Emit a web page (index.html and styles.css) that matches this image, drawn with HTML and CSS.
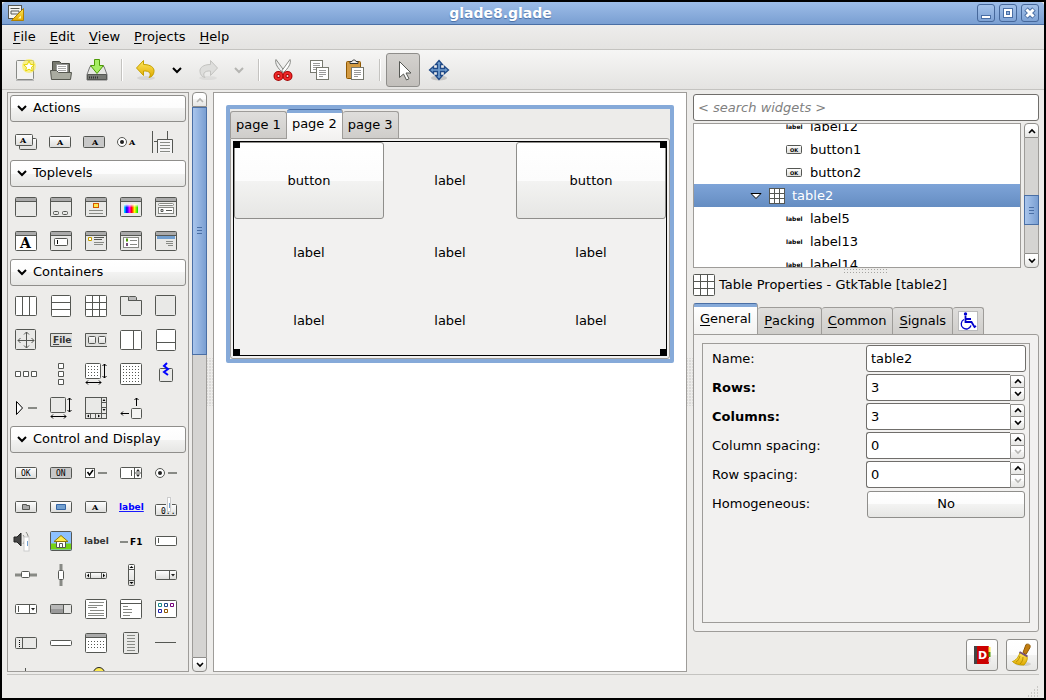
FILE: index.html
```html
<!DOCTYPE html>
<html lang="en">
<head>
    <meta charset="UTF-8">
    <meta name="viewport" content="width=device-width, initial-scale=1.0">
    <title>glade8.glade</title>
    <link rel="stylesheet" href="styles.css">
</head>
<body>
<!-- shared shapes -->
<svg class="defs" width="0" height="0" aria-hidden="true">
    <defs>
        <linearGradient id="face" x1="0" y1="0" x2="0" y2="1"><stop offset="0" stop-color="#fff"/><stop offset="1" stop-color="#dcdcda"/></linearGradient>
        <linearGradient id="gold" x1="0" y1="0" x2="0" y2="1"><stop offset="0" stop-color="#ffe95c"/><stop offset="1" stop-color="#e0a800"/></linearGradient>
        <linearGradient id="rainbow"><stop offset="0" stop-color="#0ff"/><stop offset=".2" stop-color="#00f"/><stop offset=".4" stop-color="#f0f"/><stop offset=".55" stop-color="#f00"/><stop offset=".75" stop-color="#ff0"/><stop offset="1" stop-color="#0d0"/></linearGradient>
        <linearGradient id="fade" x1="0" y1="0" x2="0" y2="1"><stop offset="0" stop-color="#fff"/><stop offset=".4" stop-color="#fff" stop-opacity="0"/></linearGradient>
        <pattern id="dots" width="3" height="3" patternUnits="userSpaceOnUse"><rect width="1" height="1" fill="#555753"/></pattern>
        <symbol id="win" viewBox="0 0 22 22"><rect x=".5" y="1.5" width="21" height="19" rx="1" fill="#e9e9e7" stroke="#555753"/><path d="M1 3.5h20" stroke="#aaa" stroke-width="3"/><path d="M1 5.5h20" stroke="#555753"/></symbol>
        <symbol id="grid" viewBox="0 0 22 22"><rect x=".5" y=".5" width="21" height="21" rx="1" fill="#fff" stroke="#555753"/><path d="M7.5 0v22M14.5 0v22M0 7.5h22M0 14.5h22" stroke="#555753"/></symbol>
        <symbol id="chev" viewBox="0 0 12 12"><path d="M2 4l4 4 4-4" fill="none" stroke="currentColor" stroke-width="2"/></symbol>
        <symbol id="up" viewBox="0 0 10 8"><path d="M2 6l3-3 3 3" fill="none" stroke="currentColor" stroke-width="1.6"/></symbol>
        <symbol id="down" viewBox="0 0 10 8"><path d="M2 2l3 3 3-3" fill="none" stroke="currentColor" stroke-width="1.6"/></symbol>
        <symbol id="page" viewBox="0 0 13 13"><rect x=".5" y=".5" width="12" height="12" fill="#fff" stroke="#77796f"/><path d="M3 3.5h7M3 5.5h7M3 7.5h7M3 9.5h4" stroke="#999"/></symbol>
        <symbol id="resize" viewBox="0 0 22 22"><path d="M19.5 1v14M1 19.5h15M17.5 3l2-2 2 2M17.5 13l2 2 2-2M3 17.500l-2 2 2 2M14 17.500l2 2-2 2" fill="none" stroke="#000"/></symbol>
    </defs>
</svg>

<div class="window">
    <header class="titlebar">
        <svg class="app-icon" width="16" height="16" viewBox="0 0 16 16"><rect x=".5" y=".5" width="13" height="13" fill="#f4f4f2" stroke="#555753"/><path d="M2.500 3.500h9M3 6h8v3H3z" fill="none" stroke="#555753"/><path d="M3.500 15.500h12v-12z" fill="url(#gold)" stroke="#b08000"/><path d="M10 13.500h3v-3z" fill="#fff3b0"/></svg>
        <h1>glade8.glade</h1>
        <div class="win-buttons">
            <button aria-label="Minimize"><svg width="16" height="16"><rect x="3.500" y="10.500" width="9" height="3" fill="#fff" stroke="#4a6fa5"/></svg></button>
            <button aria-label="Maximize"><svg width="16" height="16"><path d="M5 5h6v6H5z" fill="none" stroke="#4a6fa5" stroke-width="4"/><path d="M5 5h6v6H5z" fill="none" stroke="#fff" stroke-width="2"/></svg></button>
            <button aria-label="Close"><svg width="16" height="16"><path d="M4 4l8 8M12 4l-8 8" stroke="#4a6fa5" stroke-width="5"/><path d="M4.500 4.500l7 7M11.500 4.500l-7 7" stroke="#fff" stroke-width="3"/></svg></button>
        </div>
    </header>

    <nav class="menubar">
        <button><u>F</u>ile</button>
        <button><u>E</u>dit</button>
        <button><u>V</u>iew</button>
        <button><u>P</u>rojects</button>
        <button><u>H</u>elp</button>
    </nav>

    <div class="toolbar">
        <button aria-label="New"><svg width="24" height="24"><rect x="3.500" y="2.500" width="17" height="19" rx="1" fill="#f3f3f1" stroke="#888a85"/><path d="M3 22.500h18" stroke="#bbb"/><circle cx="16" cy="8" r="7" fill="#fcee4f" opacity=".65"/><path d="M16 3l1.600 3.400 3.700.400-2.800 2.500.8 3.700-3.300-1.800-3.300 1.800.8-3.700-2.800-2.500 3.700-.400z" fill="#fff" stroke="#e8d500"/></svg></button>
        <button aria-label="Open"><svg width="24" height="24"><path d="M3.500 19V3.500h7l2 2h8V19z" fill="#77796f" stroke="#4b4d47"/><path d="M7.500 6.500h11v9h-11z" fill="#fff" stroke="#999"/><path d="M9 8.500h8M9 10.500h8M9 12.500h8" stroke="#aaa"/><path d="M1.500 12.500h6l2 2h13l-1 7h-19z" fill="#a9aba0" stroke="#55574f"/></svg></button>
        <button aria-label="Save"><svg width="24" height="24"><path d="M5 8.500h14l3 8v5.500H2v-5.500z" fill="#e6e6e3" stroke="#777"/><path d="M2.500 16.500h19v5h-19z" fill="#777974" stroke="#555753"/><path d="M4 19.500h10" stroke="#333" stroke-width="2" stroke-dasharray="1 1"/><path d="M9.500 1.500h5v6h4L12 15.500 5.500 7.500h4z" fill="#a6ee62" stroke="#4e9a06"/></svg></button>
        <span class="sep"></span>
        <button aria-label="Undo"><svg width="24" height="24"><ellipse cx="12" cy="20" rx="9" ry="2" fill="#000" opacity=".08"/><path d="M9.500 2.500v4c7 0 11 3 10.500 7-.2 3-2 5.500-5 6 2.500-3 1.500-7-5.500-6.500v4.500l-7-7.500z" fill="url(#gold)" stroke="#c4a000"/></svg></button>
        <button class="arrow" aria-label="Undo history"><svg width="12" height="12"><use href="#chev"/></svg></button>
        <button aria-label="Redo" disabled><svg width="24" height="24"><ellipse cx="12" cy="20" rx="9" ry="2" fill="#000" opacity=".05"/><path d="M14.500 2.500v4c-7 0-11 3-10.500 7 .2 3 2 5.500 5 6-2.500-3-1.500-7 5.500-6.500v4.500l7-7.500z" fill="#dededc" stroke="#c3c3c0"/></svg></button>
        <button class="arrow" aria-label="Redo history" disabled><svg width="12" height="12"><use href="#chev"/></svg></button>
        <span class="sep"></span>
        <button aria-label="Cut"><svg width="24" height="24"><path d="M5 1.500c-1.500 4 2 9 6.500 13l1.500-2z" fill="#eee" stroke="#888a85"/><path d="M19 1.500c1.500 4-2 9-6.500 13l-1.500-2z" fill="#fff" stroke="#888a85"/><circle cx="7.500" cy="18" r="3" fill="none" stroke="#a40000" stroke-width="4"/><circle cx="16.500" cy="18" r="3" fill="none" stroke="#a40000" stroke-width="4"/><circle cx="7.500" cy="18" r="3" fill="none" stroke="#ef2929" stroke-width="2"/><circle cx="16.500" cy="18" r="3" fill="none" stroke="#ef2929" stroke-width="2"/></svg></button>
        <button aria-label="Copy"><svg width="24" height="24"><use href="#page" x="3" y="2" width="13" height="13"/><use href="#page" x="9" y="9" width="13" height="13"/></svg></button>
        <button aria-label="Paste"><svg width="24" height="24"><rect x="3.500" y="3.500" width="14" height="17" rx="1" fill="#d39a42" stroke="#8f5902"/><path d="M7 5.500V3.500h2c0-2 4-2 4 0h2v2z" fill="#eee" stroke="#333"/><use href="#page" x="8" y="9" width="13" height="13"/></svg></button>
        <span class="sep"></span>
        <button class="pressed" aria-label="Selector"><svg width="24" height="24"><path d="M8.500 3.500v16l4-3.500 3 6 2.500-1.300-3-5.700h5z" fill="#fff" stroke="#555753"/></svg></button>
        <button aria-label="Drag and resize"><svg width="24" height="24"><ellipse cx="12" cy="20" rx="8" ry="2.500" fill="#000" opacity=".15"/><path d="M12 2.500l3.500 4h-2v4h4v-2l4 3.500-4 3.500v-2h-4v4h2L12 21.500l-3.500-4h2v-4h-4v2L2.500 12l4-3.500v2h4v-4h-2z" fill="#729fcf" stroke="#204a87" stroke-width="1.300"/></svg></button>
    </div>

    <main class="workspace">
        <aside class="palette">
            <section>
                <button class="group"><svg width="12" height="12"><use href="#chev"/></svg>Actions</button>
                <div class="icons">
                    <svg><rect x="4.500" y="7.500" width="17" height="11" rx="1" fill="url(#face)"/><rect x=".5" y="3.500" width="17" height="11" rx="1" fill="url(#face)"/><text x="5" y="12">A</text></svg>
                    <svg><rect x="-.5" y="5.500" width="21" height="11" rx="1" fill="url(#face)"/><text x="7" y="14">A</text></svg>
                    <svg><rect x="-1.500" y="5.500" width="21" height="11" rx="1" fill="#c8c8c8"/><text x="7" y="14">A</text></svg>
                    <svg><circle cx="2" cy="11" r="4.500" fill="#fff"/><circle cx="2" cy="11" r="2" fill="#222" stroke="none"/><text x="9" y="14">A</text></svg>
                    <svg><path d="M-2.500 0v22M12.500 0v8M-1 10.500h4"/><path d="M2.500 22V8.500h15V22" fill="#f5f5f5"/><path class="thin" d="M5 11.500h10M5 14.500h10M5 17.500h10M5 20.500h10"/></svg>
                </div>
            </section>
            <section>
                <button class="group"><svg width="12" height="12"><use href="#chev"/></svg>Toplevels</button>
                <div class="icons">
                    <svg><use href="#win"/></svg>
                    <svg><use href="#win"/><rect x="3.500" y="15.500" width="5" height="3" rx="1"/><rect x="12.500" y="15.500" width="5" height="3" rx="1"/></svg>
                    <svg><use href="#win"/><rect x="8.500" y="7.500" width="5" height="4" fill="#fce94f" stroke="#d45500"/><path class="thin" d="M4 14.500h14M4 17.500h14"/></svg>
                    <svg><use href="#win"/><rect x="4" y="8" width="14" height="9" fill="url(#rainbow)" stroke="none"/><rect x="4" y="8" width="14" height="9" fill="url(#fade)" stroke="none"/></svg>
                    <svg><use href="#win"/><rect class="thin" x="3.500" y="7.500" width="15" height="2" rx="1" fill="#fff"/><rect class="thin" x="3.500" y="11.500" width="15" height="6" fill="#fff"/><path d="M6 13.500h2v2H6zM11 14.500h6"/></svg>
                    <svg><use href="#win"/><path d="M1 6h20v14H1z" fill="#fff" stroke="none"/><text class="big" x="5" y="18">A</text></svg>
                    <svg><use href="#win"/><rect x="4.500" y="8.500" width="13" height="7" rx="1" fill="#fff"/><path d="M7.500 10v4" stroke="#000"/></svg>
                    <svg><use href="#win"/><path d="M3.500 7.500h3v3h-3z" fill="#fff" stroke="#c4a000"/><path d="M9 7.500h10M9 9.500h8" /><path class="thin" d="M9 12.500h10M9 14.500h9"/></svg>
                    <svg><use href="#win"/><rect class="thin" x="3.500" y="7.500" width="15" height="10" fill="#fff"/><path d="M6 10h2" stroke="#4e9a06" stroke-width="3"/><path d="M6 14.500h2" stroke="#75507b" stroke-width="3"/><path class="thin" d="M10 10.500h7M10 14.500h7"/></svg>
                    <svg><use href="#win"/><path d="M2 7.500h18" stroke="#729fcf" stroke-width="3"/><path class="thin" d="M11 11.500h7M11 13.500h7M13 15.500h5"/></svg>
                </div>
            </section>
            <section>
                <button class="group"><svg width="12" height="12"><use href="#chev"/></svg>Containers</button>
                <div class="icons">
                    <svg><rect x=".5" y="1.500" width="21" height="19" rx="1" fill="#fff"/><path d="M7.500 2v19M14.500 2v19"/></svg>
                    <svg><rect x="1.500" y=".5" width="19" height="21" rx="1" fill="#fff"/><path d="M1 7.500h20M1 14.500h20"/></svg>
                    <svg><use href="#grid"/></svg>
                    <svg><path d="M.5 19.500v-18h8v4h13v14l-1 1h-19z" fill="#e9e9e7"/><path d="M8.500 5.500v-3l1-1h6l1 1v3z" fill="#bbb"/></svg>
                    <svg><rect x=".5" y=".5" width="20" height="20" rx="1" fill="#e9e9e7"/></svg>
                    <svg><rect x=".5" y=".5" width="20" height="20" rx="1" fill="#e9e9e7"/><path d="M11.500 3v16M3 11.500h16M9 5.500l2.500-2.500 2.500 2.500M9 16.500l2.500 2.500 2.500-2.500M5.500 9L3 11.500 5.500 14M16.500 9l2.500 2.500-2.500 2.500"/></svg>
                    <svg><path d="M22 4.500H.5v13H22" fill="#e0e0de"/><text class="sans" x="3" y="14"><tspan text-decoration="underline">F</tspan>ile</text></svg>
                    <svg><path d="M22 4.500H.5v13H22" fill="#e0e0de"/><rect x="3.500" y="7.500" width="7" height="7" rx="1" fill="url(#face)"/><rect x="13.500" y="7.500" width="7" height="7" rx="1" fill="url(#face)"/></svg>
                    <svg><rect x=".5" y="1.500" width="21" height="19" rx="1" fill="#fff"/><path d="M13.500 2v19"/></svg>
                    <svg><rect x="1.500" y=".5" width="19" height="21" rx="1" fill="#fff"/><path d="M1 13.500h20"/></svg>
                    <svg><path d="M.5 8.500h5v5h-5zM8.500 8.500h5v5h-5zM16.500 8.500h5v5h-5z" fill="#fff"/></svg>
                    <svg><path d="M8.500.5h5v5h-5zM8.500 8.500h5v5h-5zM8.500 16.500h5v5h-5z" fill="#fff"/></svg>
                    <svg><rect x=".5" y=".5" width="15" height="15" rx="1" fill="#fff"/><rect x="3" y="3" width="11" height="11" fill="url(#dots)" stroke="none"/><use href="#resize"/></svg>
                    <svg><rect x=".5" y=".5" width="21" height="21" rx="1" fill="#fff"/><rect x="3" y="3" width="17" height="17" fill="url(#dots)" stroke="none"/></svg>
                    <svg><rect x="4.500" y="5.500" width="13" height="13" rx="1" fill="#e9e9e7"/><path d="M12 0L9 3l4 3-4 3 4 3" stroke="#00f" stroke-width="2"/></svg>
                    <svg><path d="M1.500 4.500v13l6-6.500z" fill="#fff" stroke="#000"/><path class="thin" d="M13 11h9" stroke-width="2"/></svg>
                    <svg><rect x=".5" y=".5" width="15" height="15" rx="1" fill="#e9e9e7"/><use href="#resize"/></svg>
                    <svg><rect x=".5" y=".5" width="21" height="21" fill="#e9e9e7"/><path d="M16.500 0v22M0 16.500h22M16 5.500h5M16 10.500h5M5.500 16v6M10.500 16v6"/><path d="M17.500 4l1.500-2 1.500 2zM17.500 12l1.500 2 1.500-2zM4 17.500L2 19l2 1.500zM13 17.500l2 1.500-2 1.500z" fill="#000" stroke="none"/></svg>
                    <svg><rect x="11.500" y="11.500" width="10" height="10" rx="1" fill="#f4f4f2"/><path d="M16.500 1v8M14.500 3l2-2 2 2M1 16.500h8M3 14.500l-2 2 2 2" stroke="#000"/></svg>
                </div>
            </section>
            <section>
                <button class="group"><svg width="12" height="12"><use href="#chev"/></svg>Control and Display</button>
                <div class="icons">
                    <svg><rect x=".5" y="5.500" width="21" height="11" rx="1" fill="url(#face)"/><text class="mono" x="6" y="14">OK</text></svg>
                    <svg><rect x=".5" y="5.500" width="21" height="11" rx="1" fill="#c8c8c8"/><text class="mono" x="6" y="14">ON</text></svg>
                    <svg><rect x=".5" y="6.500" width="9" height="9" fill="#fff"/><path d="M2.500 10l2 3 3.500-5" stroke="#000" stroke-width="1.500"/><path class="thin" d="M13 11h9" stroke-width="2"/></svg>
                    <svg><rect x=".5" y="5.500" width="21" height="11" rx="1" fill="#fff"/><path d="M14.500 5v12M15 11h7M11.500 8v6"/><path d="M16 9.500l2-2.500 2 2.500zM16 12.500l2 2.500 2-2.500z" fill="#222" stroke="none"/></svg>
                    <svg><circle cx="5" cy="11" r="4.500" fill="#fff"/><circle cx="5" cy="11" r="2" fill="#222" stroke="none"/><path class="thin" d="M13 11h9" stroke-width="2"/></svg>
                    <svg><rect x=".5" y="5.500" width="21" height="11" rx="1" fill="url(#face)"/><path d="M7.500 13.500v-5h4v1h3v4z" fill="#aaa"/></svg>
                    <svg><rect x=".5" y="5.500" width="21" height="11" rx="1" fill="url(#face)"/><path d="M6.500 8.500h9v5h-9z" fill="#729fcf" stroke="#3465a4"/></svg>
                    <svg><rect x=".5" y="5.500" width="21" height="11" rx="1" fill="url(#face)"/><text x="7" y="14">A</text></svg>
                    <svg><text class="link" x="-1" y="14">label</text></svg>
                    <svg><rect x=".5" y="8.500" width="21" height="11" rx="1" fill="url(#face)"/><text class="mono" x="6" y="18">0..</text><rect x="11" y="1" width="6" height="15" fill="#eee" stroke="none"/><rect x="12.500" y="1.500" width="3" height="14" fill="#fff" style="stroke:#ccc"/><path d="M14.500 7v5" stroke="#729fcf"/></svg>
                    <svg><path d="M-1 7h3l4-4v13l-4-4h-3z" fill="#444" stroke="#222"/><path class="thin" d="M8 5c2 2 2 6 0 9M11 2c3 4 3 8 1 12"/><rect x="9" y="7" width="5" height="14" fill="#fff" stroke="#ccc"/><path d="M12.500 11v5" stroke="#729fcf"/></svg>
                    <svg><rect x=".5" y="1.500" width="21" height="19" rx="1" fill="#8cc0ff"/><path d="M1 16.500h20" stroke="#73d216" stroke-width="6"/><path d="M6.500 17.500v-6h9v6z" fill="#fff"/><path d="M4 11.500l7-6 7 6z" fill="#fce94f" stroke="#8f7902"/><path d="M9.500 17.500v-4h3v4"/></svg>
                    <svg><text class="sans" x="-1" y="14">label</text></svg>
                    <svg><path class="thin" d="M0 12h8" stroke-width="2"/><text class="sans black" x="10" y="15">F1</text></svg>
                    <svg><rect x=".5" y="6.500" width="21" height="9" rx="1" fill="#fff"/><path d="M3.500 8v5"/></svg>
                    <svg><path class="thin" d="M0 11h22" stroke-width="3"/><rect x="6.500" y="7.500" width="8" height="6" rx="1" fill="#fff"/></svg>
                    <svg><path class="thin" d="M11 0v22" stroke-width="3"/><rect x="8.500" y="6.500" width="5" height="9" rx="1" fill="#fff"/></svg>
                    <svg><rect x=".5" y="8.500" width="21" height="6" rx="1" fill="url(#face)"/><path d="M5.500 8v7M16.500 8v7"/><path d="M4 9.500l-2 2 2 2zM18 9.500l2 2-2 2z" fill="#000" stroke="none"/></svg>
                    <svg><rect x="8.500" y=".5" width="6" height="21" rx="1" fill="url(#face)"/><path d="M8 5.500h7M8 16.500h7"/><path d="M9.500 4l2-2 2 2zM9.500 18l2 2 2-2z" fill="#000" stroke="none"/></svg>
                    <svg><rect x=".5" y="6.500" width="21" height="9" rx="1" fill="url(#face)"/><path d="M14.500 6v10"/><path d="M16 10h4l-2 2.500z" fill="#222" stroke="none"/></svg>
                    <svg><rect x=".5" y="6.500" width="21" height="9" rx="1" fill="#fff"/><path d="M14.500 6v10M3.500 8v6"/><path d="M16 10h4l-2 2.500z" fill="#222" stroke="none"/></svg>
                    <svg><rect x=".5" y="6.500" width="21" height="9" rx="1" fill="#e6e6e4"/><path d="M1 7h13v8H1z" fill="#999" stroke="none"/><path d="M1 9h13" stroke="#b8b8b8" stroke-width="4"/><path d="M13.500 6v10"/></svg>
                    <svg><rect x=".5" y="1.500" width="21" height="19" rx="1" fill="#fff"/><path class="thin" d="M4 4.500h15M3 7.500h15M3 9.500h9M5 12.500h14M3 15.500h16M3 17.500h16"/></svg>
                    <svg><rect x=".5" y="1.500" width="21" height="19" rx="1" fill="#fff"/><path d="M1 5.500h20"/><path class="thin" d="M3 8.500h5M3 11.500h9M3 14.500h9M3 17.500h7"/></svg>
                    <svg><rect x=".5" y="2.500" width="21" height="17" rx="1" fill="#fff"/><path d="M3.500 5.500h3v3h-3z" stroke="#1a8a8a"/><path d="M9.500 5.500h3v3h-3z" stroke="#204a87"/><path d="M15.500 5.500h3v3h-3z" stroke="#75007b"/><path d="M3.500 11.500h3v3h-3z" stroke="#22a"/><path d="M9.500 11.500h3v3h-3z" stroke="#8f5902"/></svg>
                    <svg><rect x=".5" y="5.500" width="21" height="11" rx="1" fill="#e9e9e7"/><path d="M7.500 5v12"/><path d="M4.500 8v7" stroke="#000" stroke-dasharray="1 1"/></svg>
                    <svg><rect x=".5" y="8.500" width="21" height="5" rx="1" fill="#fff"/></svg>
                    <svg><rect x=".5" y="1.500" width="21" height="19" rx="1" fill="#fff"/><path d="M1 3.500h20" stroke="#aaa" stroke-width="3"/><path d="M1 5.500h20"/><rect x="3" y="7" width="16" height="11" fill="url(#dots)" stroke="none"/></svg>
                    <svg><rect x="3.500" y=".5" width="15" height="21" rx="1" fill="#e9e9e7"/><path class="thin" d="M7 3.500h8M7 6.500h8M7 9.500h8M7 12.500h8M7 15.500h8M7 18.500h8"/></svg>
                    <svg><path d="M0 10.500h21"/></svg>
                    <svg><path d="M10.500 2v20"/></svg>
                    <svg></svg>
                    <svg><circle cx="14" cy="7" r="5.500" fill="#fce94f" stroke="#222"/></svg>
                </div>
            </section>
        </aside>
        <div class="scrollbar">
            <button aria-label="Scroll up" disabled><svg width="10" height="8"><use href="#up"/></svg></button>
            <div class="trough"><div class="thumb tall"></div></div>
            <button aria-label="Scroll down"><svg width="10" height="8"><use href="#down"/></svg></button>
        </div>
        <div class="splitter"></div>

        <div class="design">
            <div class="notebook">
                <div class="tabs">
                    <button>page 1</button>
                    <button class="active">page 2</button>
                    <button>page 3</button>
                </div>
                <div class="page">
                    <div class="selection">
                        <button>button</button><span>label</span><button>button</button>
                        <span>label</span><span>label</span><span>label</span>
                        <span>label</span><span>label</span><span>label</span>
                        <i class="handle nw"></i><i class="handle ne"></i><i class="handle sw"></i><i class="handle se"></i>
                    </div>
                </div>
            </div>
        </div>
        <div class="splitter"></div>

        <aside class="side">
            <input class="search" type="text" aria-label="Search widgets" placeholder="&lt; search widgets &gt;">
            <div class="inspector">
                <ul class="tree">
                    <li><small>label</small>label12</li>
                    <li><svg width="16" height="9"><rect x=".5" y=".5" width="15" height="8" rx="1" fill="url(#face)" stroke="#555753"/><text class="tiny" x="4" y="7">OK</text></svg>button1</li>
                    <li><svg width="16" height="9"><rect x=".5" y=".5" width="15" height="8" rx="1" fill="url(#face)" stroke="#555753"/><text class="tiny" x="4" y="7">OK</text></svg>button2</li>
                    <li class="selected"><svg width="12" height="8"><path d="M1 1.500h10L6 6.500z" fill="#fff" stroke="#000"/></svg><svg width="16" height="16"><rect x=".5" y=".5" width="15" height="15" fill="#fff" stroke="#555753"/><path d="M5.500 0v16M10.500 0v16M0 5.500h16M0 10.500h16" stroke="#555753"/></svg>table2</li>
                    <li><small>label</small>label5</li>
                    <li><small>label</small>label13</li>
                    <li><small>label</small>label14</li>
                </ul>
                <div class="scrollbar">
                    <button aria-label="Scroll up"><svg width="10" height="8"><use href="#up"/></svg></button>
                    <div class="trough low"><div class="thumb"></div></div>
                    <button aria-label="Scroll down"><svg width="10" height="8"><use href="#down"/></svg></button>
                </div>
            </div>
            <div class="hsplitter"></div>
            <h2><svg width="22" height="22"><use href="#grid"/></svg>Table Properties - GtkTable [table2]</h2>

            <div class="tabs props-tabs">
                <button class="active"><u>G</u>eneral</button>
                <button><u>P</u>acking</button>
                <button><u>C</u>ommon</button>
                <button><u>S</u>ignals</button>
                <button class="a11y" aria-label="Accessibility"><svg width="20" height="20"><rect x=".5" y=".5" width="19" height="19" fill="#fff" stroke="#bbb"/><circle cx="7.500" cy="3" r="1.700" fill="#00c"/><path d="M7.500 5v6h6l3 5 1.500-1M8 8h5" fill="none" stroke="#00c" stroke-width="1.800"/><path d="M6 8.500a5 5 0 1 0 7 6" fill="none" stroke="#00c" stroke-width="1.300"/></svg></button>
            </div>
            <div class="props">
                <form>
                    <label for="name">Name:</label>
                    <input id="name" type="text" value="table2">
                    <label for="rows" class="changed">Rows:</label>
                    <div class="spin"><input id="rows" type="text" value="3"><div><button type="button" aria-label="More"><svg width="10" height="8"><use href="#up"/></svg></button><button type="button" aria-label="Less"><svg width="10" height="8"><use href="#down"/></svg></button></div></div>
                    <label for="cols" class="changed">Columns:</label>
                    <div class="spin"><input id="cols" type="text" value="3"><div><button type="button" aria-label="More"><svg width="10" height="8"><use href="#up"/></svg></button><button type="button" aria-label="Less"><svg width="10" height="8"><use href="#down"/></svg></button></div></div>
                    <label for="colsp">Column spacing:</label>
                    <div class="spin"><input id="colsp" type="text" value="0"><div><button type="button" aria-label="More"><svg width="10" height="8"><use href="#up"/></svg></button><button type="button" aria-label="Less" disabled><svg width="10" height="8"><use href="#down"/></svg></button></div></div>
                    <label for="rowsp">Row spacing:</label>
                    <div class="spin"><input id="rowsp" type="text" value="0"><div><button type="button" aria-label="More"><svg width="10" height="8"><use href="#up"/></svg></button><button type="button" aria-label="Less" disabled><svg width="10" height="8"><use href="#down"/></svg></button></div></div>
                    <label for="homog">Homogeneous:</label>
                    <button id="homog" class="toggle" type="button">No</button>
                </form>
            </div>
            <div class="actions">
                <button aria-label="Documentation"><svg width="20" height="20"><rect x="2" y="1" width="15" height="18" rx="1" fill="#c00"/><path d="M2 1h3v18H2z" fill="#444"/><path d="M17.500 2v5" stroke="#fce94f" stroke-width="2"/><path d="M17.500 7v5" stroke="#4e9a06" stroke-width="2"/><path d="M17.500 13v4" stroke="#ddd" stroke-width="2"/><text class="book" x="6" y="14">D</text></svg></button>
                <button aria-label="Reset"><svg width="24" height="24"><ellipse cx="13" cy="21" rx="8" ry="2" fill="#000" opacity=".12"/><path d="M16 1.500c2-1 5 0 4 3l-4 7-3-2z" fill="#c17d11" stroke="#8f5902"/><path d="M10 9.500l7 4c1 3-1 6-3 8.500-5 0-9-1-11.500-3.500 3-1 6-4 7.500-9z" fill="url(#gold)" stroke="#c4a000"/><path d="M9.500 9l8 4.500" stroke="#75507b" stroke-width="2"/><path d="M10 13c-1 3-2 5-4 6M13 14c0 3-1 5-3 7" fill="none" stroke="#b89000"/></svg></button>
            </div>
        </aside>
    </main>

    <footer class="statusbar">
        <svg width="12" height="12"><path d="M10 1h1M7 4h1M10 4h1M4 7h1M7 7h1M10 7h1M1 10h1M4 10h1M7 10h1M10 10h1" stroke="#a5a4a1"/></svg>
    </footer>
</div>
</body>
</html>
```
FILE: styles.css
```css
* {
    box-sizing: border-box;
}
body {
    margin: 0;
    font-family: "DejaVu Sans", sans-serif;
    font-size: 13px;
    line-height: 16px;
    color: #000;
    background-color: #000;
}
button, input {
    font: inherit;
    color: inherit;
    margin: 0;
    padding: 0;
}
button {
    display: flex;
    align-items: center;
    justify-content: center;
    border: 1px solid #8f8e8b;
    border-radius: 3px;
    background: linear-gradient(#fff, #fcfcfc 50%, #f3f3f2 50%, #e6e6e4);
}
button:disabled {
    color: #b5b5b2;
}
h1, h2, ul {
    margin: 0;
    padding: 0;
}
svg {
    flex: none;
}
.defs {
    position: absolute;
}
u {
    text-underline-offset: 2px;
}

/* window */
.window {
    display: flex;
    flex-direction: column;
    height: 100vh;
    border: 2px solid #000;
    background: #edecea;
}
.titlebar {
    display: flex;
    align-items: center;
    height: 23px;
    padding: 0 5px 0 6px;
    border-bottom: 1px solid #4a6fa5;
    border-radius: 4px 4px 0 0;
    background: linear-gradient(#9dbde8, #7a9fd2);
}
.titlebar h1 {
    flex: 1;
    text-align: center;
    font-size: 14px;
    color: #fff;
    text-shadow: 0 1px 1px #4a6fa5;
}
.win-buttons {
    display: flex;
    gap: 4px;
}
.win-buttons button {
    width: 18px;
    height: 18px;
    border-color: #46689b;
    background: linear-gradient(#a4c2ea, #7fa3d5);
}
.menubar {
    display: flex;
    height: 25px;
    padding: 0 4px;
    border-bottom: 1px solid #c4c3c0;
    background: linear-gradient(#eeedec, #e4e3e1);
}
.menubar button {
    padding: 0 7px;
    border: 0;
    background: none;
}

/* toolbar */
.toolbar {
    display: flex;
    align-items: center;
    height: 40px;
    padding: 0 5px;
    border-bottom: 1px solid #c4c3c0;
    background: linear-gradient(#f6f6f5, #e4e3e1);
}
.toolbar button {
    width: 36px;
    height: 34px;
    border: 0;
    background: none;
}
.toolbar .arrow {
    width: 26px;
}
.toolbar .pressed {
    width: 34px;
    margin: 0 1px 0 0;
    border: 1px solid #8f8e8b;
    background: linear-gradient(#d4d2cf, #c2bfbb);
}
.sep {
    width: 13px;
    height: 22px;
    background: linear-gradient(90deg, #c4c3c0 1px, #fff 1px, #fff 2px, transparent 2px) 6px 0 no-repeat;
}

/* main area */
.workspace {
    flex: 1;
    display: flex;
    min-height: 0;
    padding: 2px 5px 0;
}
.palette {
    width: 182px;
    padding-top: 2px;
    border: 1px solid #9e9c99;
    overflow: hidden;
}
.group {
    width: 176px;
    height: 27px;
    margin: 0 2px 3px;
    padding: 0 0 1px 5px;
    justify-content: flex-start;
    gap: 5px;
}
.icons {
    display: grid;
    grid-template-columns: repeat(5, 35px);
    grid-auto-rows: 34px;
    align-items: center;
    margin: 0 0 1px 7px;
}
.icons svg {
    width: 22px;
    height: 22px;
    overflow: visible;
    fill: none;
    stroke: #555753;
}
.icons .thin {
    stroke: #888a85;
}
.icons text {
    fill: #000;
    stroke: none;
    font: bold 8px "DejaVu Serif", serif;
}
.icons .big {
    font-size: 14px;
}
.icons .mono {
    font: 8px "DejaVu Sans Mono", monospace;
}
.icons .sans, .icons .link {
    fill: #333;
    font: bold 9px "DejaVu Sans", sans-serif;
}
.icons .black {
    fill: #000;
}
.icons .link {
    fill: #00f;
    text-decoration: underline;
}

/* scrollbars and splitters */
.scrollbar {
    display: flex;
    flex-direction: column;
    flex: none;
    width: 15px;
    margin-left: 3px;
}
.scrollbar button {
    height: 15px;
    border-radius: 4px 4px 0 0;
}
.scrollbar button:last-child {
    border-radius: 0 0 4px 4px;
}
.trough {
    flex: 1;
    border: solid #9e9c99;
    border-width: 0 1px;
    background: #d5d4d2;
}
.thumb {
    height: 30px;
    margin: 0 -1px;
    border: 1px solid #4a6fa5;
    background:
        repeating-linear-gradient(#4a6fa5 0 1px, transparent 1px 3px) center / 5px 7px no-repeat,
        linear-gradient(90deg, #a9c5ec, #7a9fd2);
}
.thumb.tall {
    height: 45%;
}
.trough.low {
    padding-top: 57px;
}
.splitter {
    flex: none;
    width: 6px;
    background: radial-gradient(circle, #a5a4a1 1px, transparent 1px) center / 3px 3px;
    background-clip: content-box;
    padding: 266px 0;
}

/* design canvas */
.design {
    flex: 1;
    padding: 12px;
    border: 1px solid #9e9c99;
    background: #fff;
}
.notebook {
    width: 448px;
    border: 4px solid #86aad9;
    border-radius: 2px;
    background: #edecea;
}
.tabs {
    display: flex;
    align-items: flex-end;
}
.tabs button {
    height: 27px;
    padding: 0 5px;
    border-color: #9e9c99;
    border-bottom: 0;
    border-left-width: 0;
    border-radius: 3px 3px 0 0;
    background: linear-gradient(#dfdedc, #cfcdca);
}
.tabs button:first-child {
    border-left-width: 1px;
}
.tabs .active {
    height: 30px;
    margin-bottom: -1px;
    padding-bottom: 2px;
    border-top-color: #4a6fa5;
    background: linear-gradient(#86aad9 3px, #fff 3px, #f2f1f0);
}
.page {
    padding: 2px;
    border: 1px solid #9e9c99;
    border-radius: 0 3px 3px 3px;
    background: #f2f1f0;
}
.selection {
    position: relative;
    display: grid;
    grid-template-columns: 150fr 132fr 150fr;
    grid-template-rows: 77px 68px 68px;
    border: 1px solid #000;
}
.selection span {
    align-self: center;
    text-align: center;
}
.handle {
    position: absolute;
    width: 7px;
    height: 7px;
    background: #000;
}
.nw { top: -1px; left: -1px; }
.ne { top: -1px; right: -1px; }
.sw { bottom: -1px; left: -1px; }
.se { bottom: -1px; right: -1px; }

/* inspector and properties */
.side {
    display: flex;
    flex-direction: column;
    flex: none;
    width: 346px;
}
input {
    min-width: 0;
    height: 27px;
    padding: 0 4px;
    border: 1px solid #706e6b;
    border-radius: 3px;
    background: #fff;
}
.search {
    flex: none;
    margin: 2px 0;
}
.search::placeholder {
    color: #808080;
    font-style: italic;
}
.inspector {
    display: flex;
    flex: none;
    height: 145px;
}
.tree {
    flex: 1;
    list-style: none;
    border: 1px solid #9e9c99;
    background: #fff;
    overflow: hidden;
}
.tree li {
    display: flex;
    align-items: center;
    gap: 8px;
    height: 23px;
    padding-left: 92px;
}
.tree li:first-child {
    margin-top: -9px;
}
.tree .selected {
    padding-left: 56px;
    gap: 7px;
    color: #fff;
    background: linear-gradient(#7ea4d8, #658dc2);
}
.tree small {
    width: 16px;
    font-size: 6px;
    font-weight: bold;
    line-height: 8px;
    white-space: nowrap;
}
.tiny {
    font: bold 5px "DejaVu Sans", sans-serif;
}
.hsplitter {
    flex: none;
    width: 46px;
    height: 6px;
    margin: 0 auto;
    background: radial-gradient(circle, #a5a4a1 1px, transparent 1px) 0 0 / 3px 3px;
}
h2 {
    display: flex;
    align-items: center;
    gap: 4px;
    height: 22px;
    font-size: 13px;
    font-weight: normal;
}
.props-tabs {
    flex: none;
    margin-top: 7px;
}
.props-tabs button {
    padding: 0 6px;
}
.props-tabs .active {
    height: 32px;
}
.tabs .a11y {
    padding: 0 5px;
}
.props {
    flex: 1;
    padding: 8px;
    border: 1px solid #9e9c99;
    border-radius: 0 3px 3px 3px;
    background: #f2f1f0;
}
.props form {
    display: grid;
    grid-template-columns: 154px minmax(0, 1fr);
    grid-auto-rows: 27px;
    align-content: start;
    align-items: center;
    row-gap: 2px;
    height: 100%;
    padding: 1px 3px 0 9px;
    border: 1px solid #9e9c99;
}
.changed {
    font-weight: bold;
}
.spin {
    display: flex;
    align-items: center;
    padding-right: 1px;
}
.spin input {
    flex: 1;
    border-right: 0;
    border-radius: 3px 0 0 3px;
}
.spin button {
    width: 15px;
    height: 13px;
    border-radius: 0 3px 0 0;
}
.spin button:last-child {
    border-top: 0;
    border-radius: 0 0 3px 0;
}
.toggle {
    height: 27px;
    margin: 1px 1px 0;
}
.actions {
    display: flex;
    justify-content: flex-end;
    gap: 8px;
    padding: 7px 1px 1px;
}
.actions button {
    width: 32px;
    height: 32px;
}
.book {
    fill: #fff;
    font: bold 11px "DejaVu Sans", sans-serif;
}

.statusbar {
    display: flex;
    justify-content: flex-end;
    align-items: flex-end;
    height: 24px;
    margin: 2px 5px 0;
    border-top: 1px solid #c4c3c0;
}
```
